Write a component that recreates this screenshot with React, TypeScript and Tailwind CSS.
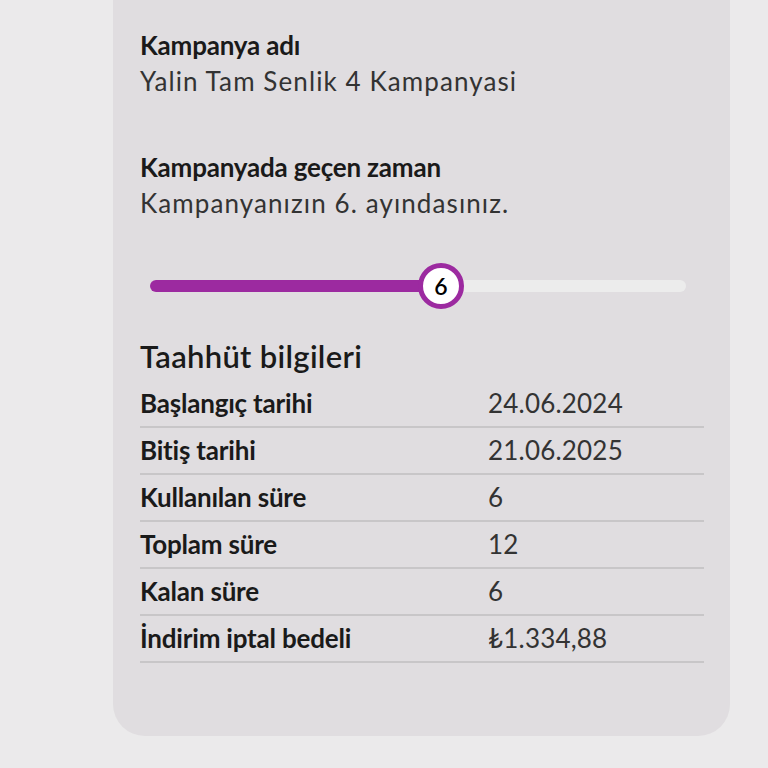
import React from "react";

const rows: [string, string][] = [
  ["Başlangıç tarihi", "24.06.2024"],
  ["Bitiş tarihi", "21.06.2025"],
  ["Kullanılan süre", "6"],
  ["Toplam süre", "12"],
  ["Kalan süre", "6"],
  ["İndirim iptal bedeli", "₺1.334,88"],
];

export default function App() {
  return (
    <div
      className="w-[768px] h-[768px] bg-[#ebeaeb] overflow-hidden text-[#1a1a1a]"
      style={{ fontFamily: "Lato, 'Noto Sans', sans-serif" }}
    >
      <div className="ml-[113px] w-[617px] h-[736px] bg-[#e0dde0] rounded-b-[32px] pl-[27px] pr-[26px] pt-[28px]">
        <div className="text-[26px] font-bold leading-[34px] tracking-[-0.2px]">Kampanya adı</div>
        <div className="mt-[1px] text-[26px] leading-[36px] tracking-[1.1px] text-[#333]">Yalin Tam Senlik 4 Kampanyasi</div>

        <div className="mt-[51px] text-[26px] font-bold leading-[34px] tracking-[-0.2px]">Kampanyada geçen zaman</div>
        <div className="mt-[1px] text-[26px] leading-[36px] tracking-[1.1px] text-[#333]">Kampanyanızın 6. ayındasınız.</div>

        <div className="mt-[42px] ml-[10px] mr-[18px] relative h-[46px] flex items-center">
          <div className="w-full h-[12px] rounded-full bg-[#ececec] flex">
            <div className="w-[280px] h-full rounded-full bg-[#9c2aa0]" />
          </div>
          <div className="absolute left-[268px] top-0 w-[46px] h-[46px] rounded-full border-[5px] border-[#9c2aa0] bg-white flex items-center justify-center text-[23px] font-semibold leading-none text-black">
            6
          </div>
        </div>

        <div className="mt-[28px] text-[31px] font-semibold leading-[38px] tracking-[0.3px]">Taahhüt bilgileri</div>
        <div className="mt-[6px]">
          {rows.map(([k, v]) => (
            <div key={k} className="flex items-center h-[47px] border-b-2 border-[#c8c6c8]">
              <div className="w-[348px] text-[26px] font-bold tracking-[-0.2px]">{k}</div>
              <div className="text-[26px] tracking-[0.2px] text-[#333]">{v}</div>
            </div>
          ))}
        </div>
      </div>
    </div>
  );
}
